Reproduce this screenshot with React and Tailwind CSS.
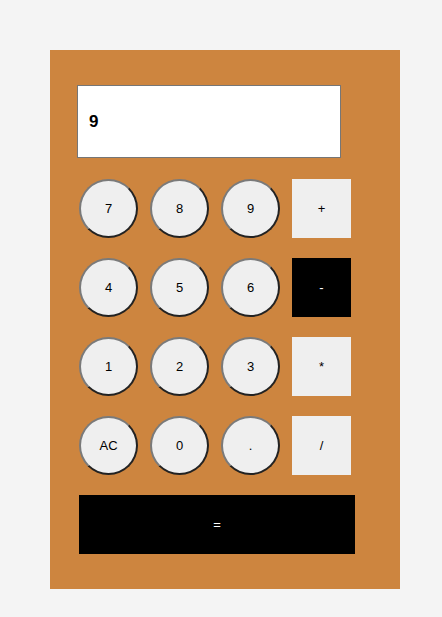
import React, { useState } from 'react';

const circleCls =
  'w-[59px] h-[59px] rounded-full bg-[#efefef] border-2 border-t-[#7a7a7a] border-l-[#7a7a7a] border-b-[#222] border-r-[#222] text-[13px] text-black flex items-center justify-center';

function App() {
  const [display] = useState('9');

  const rows = [
    ['7', '8', '9', '+'],
    ['4', '5', '6', '-'],
    ['1', '2', '3', '*'],
    ['AC', '0', '.', '/'],
  ];

  return (
    <div className="min-h-[617px] bg-[#f4f4f4] pt-[50px] pl-[50px]" style={{ fontFamily: '"Liberation Sans", Arial, sans-serif' }}>
      <div className="w-[350px] h-[539px] bg-[#cd853f] pt-[35px]">
        {/* display */}
        <div className="ml-[27px] w-[264px] h-[73px] bg-white border border-[#767676] flex items-center pl-[11px] text-[17px] font-bold text-black">
          {display}
        </div>

        <div className="ml-[29px] mt-[21px] flex flex-col gap-[20px]">
          {rows.map((row, i) => (
            <div key={i} className="flex gap-[12px]">
              {row.map((k, j) =>
                j < 3 ? (
                  <button key={k} className={circleCls}>{k}</button>
                ) : (
                  <button
                    key={k}
                    className={
                      'w-[59px] h-[59px] text-[13px] flex items-center justify-center ' +
                      (k === '-' ? 'bg-black text-white' : 'bg-[#efefef] text-black')
                    }
                  >
                    {k}
                  </button>
                )
              )}
            </div>
          ))}
          <button className="w-[276px] h-[59px] bg-black text-white text-[13px] flex items-center justify-center">=</button>
        </div>
      </div>
    </div>
  );
}

export default App;
